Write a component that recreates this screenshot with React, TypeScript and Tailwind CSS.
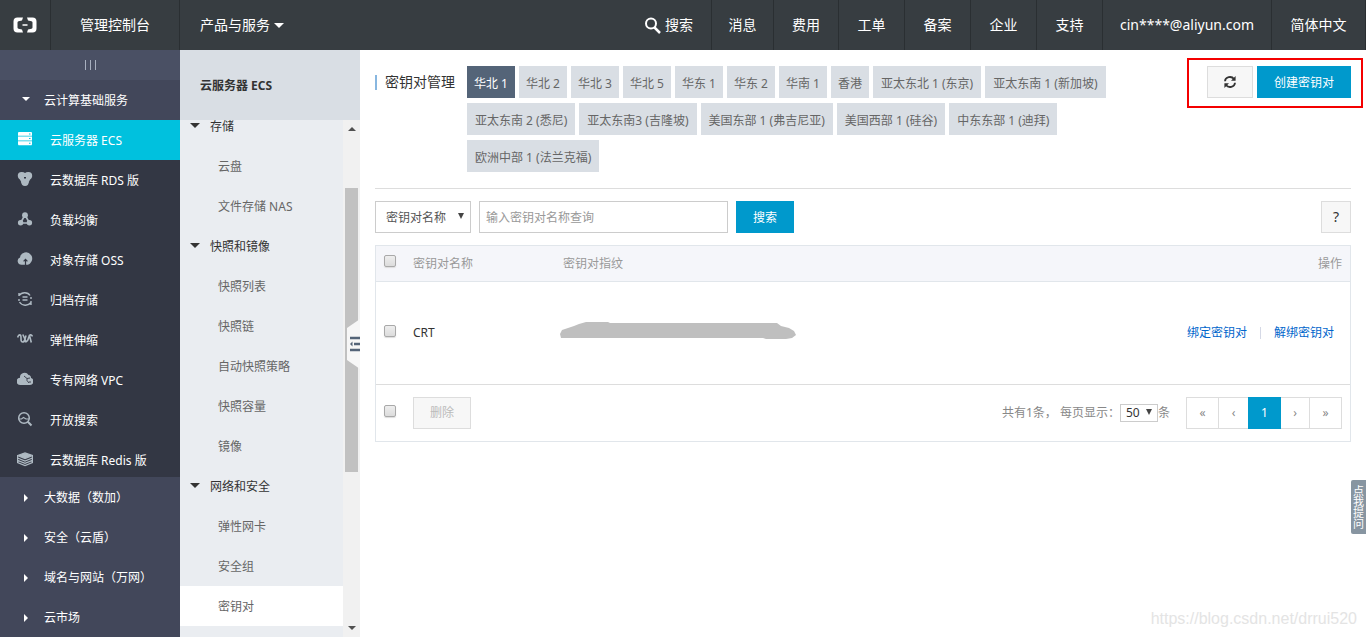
import { useState } from "react";
import type { ReactNode } from "react";
import clsx from "clsx";

const topLinks = [
    { label: "消息", width: "w-[62px]" },
    { label: "费用", width: "w-[65px]" },
    { label: "工单", width: "w-[66px]" },
    { label: "备案", width: "w-[66px]" },
    { label: "企业", width: "w-[66px]" },
    { label: "支持", width: "w-[66px]" },
    { label: "cin****@aliyun.com", width: "w-[169px]" },
    { label: "简体中文", width: "w-[94px]" },
];

const glyphs: Record<string, ReactNode> = {
    ecs: (
        <g>
            <path fill="currentColor" d="M1.5 1h13l.5 1v2.8H1V2zM1 5.500h14v4H1zM1 10.200h14v3l-.5 1h-13L1 13.200z" />
            <path fill="#00c1de" d="M12 2.500h1.500v1H12zM12 7h1.500v1H12zM12 11.700h1.500v1H12z" />
        </g>
    ),
    rds: (
        <g>
            <path fill="currentColor" d="M4.500 1.500h7L14 7l-2.500 4.500L8 14l-3.500-2.500L2 7z" />
            <circle cx="4.500" cy="4.800" r="3.700" fill="currentColor" />
            <circle cx="11.500" cy="4.800" r="3.700" fill="currentColor" />
            <circle cx="8" cy="11.200" r="3.700" fill="currentColor" />
            <path d="M7 1h2l-1 1zM7 6h2v1.500H7z" fill="#333744" />
        </g>
    ),
    slb: (
        <g fill="currentColor">
            <path d="M8 4L3.500 12M8 4l4.500 8M3.500 12h9" stroke="currentColor" strokeWidth="1.600" fill="none" />
            <circle cx="8" cy="4.200" r="2.900" />
            <circle cx="3.600" cy="11.800" r="2.700" />
            <circle cx="12.400" cy="11.800" r="2.700" />
        </g>
    ),
    oss: (
        <g>
            <path fill="currentColor" d="M4.500 13.800A3.800 3.800 0 0 1 3 6.500 6 6 0 0 1 14 4c1.800 2 1.600 5.800-.4 7.700-1 1.300-2.200 2.100-3.800 2.100z" />
            <path d="M8.500 14V8.500M6.600 10.300l1.900-2 1.900 2" stroke="#333744" strokeWidth="1.200" fill="none" />
        </g>
    ),
    archive: (
        <g stroke="currentColor" strokeWidth="1.400" fill="none">
            <path d="M2 5V2m0 2.500C5 .5 11 1 13 4.500M14 10v4m0-2.500C11 15.500 5 15 2.500 11M2 8v2M14 6v2" />
            <path d="M5.500 6h5M5.500 9h5" />
        </g>
    ),
    scaling: (
        <path d="M.6 6.500c.9-3.500 3.400-3.500 3.400 0v1.500c0 4 3 4 4 0l1-3.500M15.500 5.500c-1-2.500-3.200-2-3.700.5l-.6 2c-.7 3-3.200 4-3.900 1M5.800 3.500l3.200 7M12.500 4.500l1.800 7" stroke="currentColor" strokeWidth="1.600" fill="none" />
    ),
    vpc: (
        <g>
            <path fill="currentColor" d="M3.500 14A3.600 3.600 0 0 1 3 6.800 4.600 4.600 0 0 1 11.500 4c1.900.3 2.600 1.400 2.500 3a3.600 3.600 0 0 1-1 7z" />
            <path d="M7 5l3 2.500v2l2 2.500M10 7.500l3-.5M12 11h2" stroke="#333744" strokeWidth=".9" fill="none" />
        </g>
    ),
    search: (
        <g stroke="currentColor" fill="none">
            <circle cx="7" cy="7" r="5.300" strokeWidth="1.500" />
            <path d="M10.800 10.800l3.700 3.700" strokeWidth="2" />
            <path d="M1.500 8h3l2-1.500 2.500 1.500h3" strokeWidth="1.200" />
        </g>
    ),
    redis: (
        <g stroke="currentColor" fill="none" strokeWidth="1.300">
            <path fill="currentColor" d="M.6 4.500L8 2l7.400 2.500L8 7.500z" />
            <path d="M.6 4.500v7L8 14.500l7.400-3v-7M.6 7L8 10l7.400-3M.6 9.300L8 12.300 15.400 9.300" />
        </g>
    ),
};

const products = [
    { name: "云服务器 ECS", icon: "ecs" },
    { name: "云数据库 RDS 版", icon: "rds" },
    { name: "负载均衡", icon: "slb" },
    { name: "对象存储 OSS", icon: "oss" },
    { name: "归档存储", icon: "archive" },
    { name: "弹性伸缩", icon: "scaling" },
    { name: "专有网络 VPC", icon: "vpc" },
    { name: "开放搜索", icon: "search" },
    { name: "云数据库 Redis 版", icon: "redis" },
];

const productGroups = ["大数据（数加）", "安全（云盾）", "域名与网站（万网）", "云市场"];

const ecsMenu = [
    { title: "存储", items: ["云盘", "文件存储 NAS"] },
    { title: "快照和镜像", items: ["快照列表", "快照链", "自动快照策略", "快照容量", "镜像"] },
    { title: "网络和安全", items: ["弹性网卡", "安全组", "密钥对"] },
];

const regions = [
    "华北 1", "华北 2", "华北 3", "华北 5", "华东 1", "华东 2", "华南 1", "香港",
    "亚太东北 1 (东京)", "亚太东南 1 (新加坡)", "亚太东南 2 (悉尼)", "亚太东南3 (吉隆坡)",
    "美国东部 1 (弗吉尼亚)", "美国西部 1 (硅谷)", "中东东部 1 (迪拜)", "欧洲中部 1 (法兰克福)",
];

function CaretDown({ className }: { className?: string }) {
    return (
        <svg width="10" height="5" viewBox="0 0 10 5" className={className} aria-hidden="true">
            <path d="M0 0h10L5 5z" fill="currentColor" />
        </svg>
    );
}

function CheckBox({ label }: { label: string }) {
    return (
        <input
            type="checkbox"
            aria-label={label}
            className="block w-3 h-3 appearance-none rounded-[2px] border border-[#a9a9a9] bg-linear-to-b from-[#eeeeee] to-[#dcdcdc] shadow-[0_1px_1px_#dddddd] checked:bg-[#0099cc]"
        />
    );
}

function TopBar() {
    return (
        <header className="flex h-[50px] shrink-0 bg-[#373d41] text-white text-sm">
            <a href="#" aria-label="首页" className="flex w-[51px] items-center justify-center border-r border-[#2a2f32]">
                <svg width="24" height="16" viewBox="0 0 24 16" aria-hidden="true">
                    <path d="M10 .5H4.500A4 4 0 0 0 .5 4.500v7a4 4 0 0 0 4 4H10l-1-3-3.500-.8a1.200 1.200 0 0 1-1-1.200v-5a1.200 1.200 0 0 1 1-1.200L9 3.500zM14 .5h5.500a4 4 0 0 1 4 4v7a4 4 0 0 1-4 4H14l1-3 3.500-.8a1.200 1.200 0 0 0 1-1.200v-5a1.200 1.200 0 0 0-1-1.200L15 3.500zM9.500 7.200h5v1.600h-5z" fill="#fff" />
                </svg>
            </a>
            <a href="#" className="flex w-[129px] items-center justify-center border-r border-[#2a2f32]">管理控制台</a>
            <button type="button" className="flex items-center gap-1 pl-5">
                产品与服务
                <CaretDown />
            </button>
            <nav className="ml-auto flex">
                <button type="button" className="flex items-center gap-1 border-r border-[#2a2f32] px-[18px]">
                    <svg width="17" height="17" viewBox="0 0 17 17" fill="none" stroke="#fff" aria-hidden="true">
                        <circle cx="7" cy="6.500" r="5" strokeWidth="2" />
                        <path d="M10.500 10.500L16 16" strokeWidth="2.500" />
                    </svg>
                    搜索
                </button>
                {topLinks.map(l => (
                    <a key={l.label} href="#" className={clsx("flex items-center justify-center border-r border-[#2a2f32]", l.width)}>
                        {l.label}
                    </a>
                ))}
            </nav>
        </header>
    );
}

function ProductSidebar() {
    return (
        <nav className="flex w-[180px] shrink-0 flex-col overflow-hidden bg-[#42475a] text-white">
            <button type="button" aria-label="收起" className="flex h-[30px] shrink-0 items-center justify-center gap-1 bg-[#4a5064]">
                <span className="h-[10px] w-px bg-[#a8b0bf]" />
                <span className="h-[10px] w-px bg-[#a8b0bf]" />
                <span className="h-[10px] w-px bg-[#a8b0bf]" />
            </button>
            <button type="button" className="flex h-10 shrink-0 items-center gap-[14px] pl-[22px]">
                <CaretDown className="mb-[2px] w-2 h-4" />
                <span className="pt-[2px]">云计算基础服务</span>
            </button>
            <ul className="h-[357px] shrink-0 overflow-hidden bg-[#333744]">
                {products.map((p, i) => (
                    <li key={p.name}>
                        <a href="#" className={clsx("flex h-10 items-center gap-[17px] pl-[17px]", i === 0 && "bg-[#00c1de]")}>
                            <svg width="16" height="16" viewBox="0 0 16 16" className={clsx("mb-[2px]", i === 0 ? "text-white" : "text-[#aeb9c2]")} aria-hidden="true">
                                {glyphs[p.icon]}
                            </svg>
                            <span className="pt-[2px]">{p.name}</span>
                        </a>
                    </li>
                ))}
            </ul>
            {productGroups.map(g => (
                <button key={g} type="button" className="flex h-10 shrink-0 items-center gap-4 pt-[2px] pl-6">
                    <svg width="4" height="8" viewBox="0 0 4 8" aria-hidden="true"><path d="M0 0l4 4-4 4z" fill="#fff" /></svg>
                    {g}
                </button>
            ))}
        </nav>
    );
}

function EcsSidebar() {
    return (
        <aside className="relative flex w-[180px] shrink-0 flex-col">
            <h2 className="flex h-[70px] shrink-0 items-center bg-[#d9dee4] pt-[2px] pl-5 font-bold text-[#333333]">云服务器 ECS</h2>
            <div className="flex min-h-0 flex-1">
                <div className="flex-1 overflow-hidden bg-[#eaedf1]">
                    {/* list is scrolled part-way into the first group */}
                    <div className="-mt-[14px]">
                        {ecsMenu.map(group => (
                            <div key={group.title}>
                                <button type="button" className="flex h-10 w-full items-center gap-[10px] pl-[10px] leading-3 text-[#333333]">
                                    <CaretDown className="mb-[2px]" />
                                    <span className="pt-[2px]">{group.title}</span>
                                </button>
                                <ul>
                                    {group.items.map(item => (
                                        <li key={item}>
                                            <a href="#" className={clsx("flex h-10 items-center pt-[2px] pl-[38px] text-[#666666]", item === "密钥对" && "bg-white")}>{item}</a>
                                        </li>
                                    ))}
                                </ul>
                            </div>
                        ))}
                    </div>
                </div>
                <div className="flex w-[17px] flex-col items-center bg-[#f1f1f1] py-[7px] text-[#505050]">
                    <CaretDown className="w-2 h-1 rotate-180" />
                    <div className="flex w-[13px] flex-1 flex-col">
                        <div className="grow-[57]" />
                        <div className="grow-[284] bg-[#c1c1c1]" />
                        <div className="grow-[154]" />
                    </div>
                    <CaretDown className="w-2 h-1" />
                </div>
            </div>
            <button type="button" aria-label="收起菜单" className="absolute right-0 top-[269px]">
                <svg width="13" height="50" viewBox="0 0 13 50" className="block" aria-hidden="true">
                    <path d="M13 0v50L0 41V9z" fill="#f7f7f7" />
                    <path d="M3 19h10M7 25h6M3 31h10" stroke="#546478" strokeWidth="2.600" />
                    <path d="M5.500 22.500v5L3 25z" fill="#546478" />
                </svg>
            </button>
        </aside>
    );
}

function RegionHeader() {
    const [active, setActive] = useState("华北 1");

    return (
        <div className="flex items-start border-b border-[#dddddd] pb-4">
            <h1 className="mt-2 flex w-[92px] shrink-0 items-center text-sm leading-4 text-[#333333]">
                <span className="mr-2 h-[15px] w-[2px] bg-[#88b7e0]" />
                密钥对管理
            </h1>
            <div className="flex flex-1 flex-wrap gap-x-1 gap-y-[5px]">
                {regions.map(r => (
                    <button
                        key={r}
                        type="button"
                        onClick={() => setActive(r)}
                        className={clsx(
                            "h-8 pt-1",
                            r.includes("(") ? "px-2" : "px-[7px]",
                            r === active ? "bg-[#546478] text-white" : "bg-[#d9dee4] text-[#666666]"
                        )}
                    >
                        {r}
                    </button>
                ))}
            </div>
            <div className="relative ml-9 flex gap-1">
                <button type="button" aria-label="刷新" className="flex h-8 w-[46px] items-center justify-center border border-[#dddddd] bg-[#f7f7f7]">
                    <svg width="14" height="14" viewBox="0 0 14 14" aria-hidden="true">
                        <path d="M2 6.200C2.300 1.800 8.500.600 11 4M12 7.800c-.3 4.400-6.500 5.600-9 2.200" stroke="#333" strokeWidth="1.800" fill="none" />
                        <path d="M12.600 1v4.800H8zM1.400 13V8.200H6z" fill="#333" />
                    </svg>
                </button>
                <button type="button" className="h-8 w-[94px] bg-[#0099cc] pt-[2px] text-white">创建密钥对</button>
                <div className="pointer-events-none absolute -left-5 -right-3 -top-2 -bottom-[10px] border-2 border-[#f40000]" />
            </div>
        </div>
    );
}

function FilterBar() {
    return (
        <form className="mt-3 flex gap-2" onSubmit={e => e.preventDefault()}>
            <div className="relative">
                <select aria-label="查询字段" className="h-8 w-24 appearance-none border border-[#cccccc] bg-white pt-[2px] pl-[10px] text-[#555555]">
                    <option>密钥对名称</option>
                </select>
                <svg width="6" height="6" viewBox="0 0 6 6" className="pointer-events-none absolute right-[7px] top-3" aria-hidden="true"><path d="M0 0h6L3 6z" fill="#444" /></svg>
            </div>
            <input
                type="text"
                aria-label="密钥对名称"
                placeholder="输入密钥对名称查询"
                className="h-8 w-[249px] border border-[#cccccc] px-[6px] placeholder:text-[#999999]"
            />
            <button type="submit" className="h-8 w-[58px] bg-[#0099cc] pt-[2px] text-white">搜索</button>
            <button type="button" aria-label="帮助" className="ml-auto h-8 w-[30px] border border-[#dddddd] bg-[#f7f7f7] text-sm text-[#333333]">?</button>
        </form>
    );
}

function Pagination() {
    return (
        <div className="flex items-center">
            <span>共有1条， 每页显示：</span>
            <div className="relative">
                <select aria-label="每页显示" className="block h-[18px] w-[38px] appearance-none border border-[#cccccc] bg-white pl-[5px] leading-4 text-[#333333]">
                    <option>50</option>
                </select>
                <svg width="6" height="6" viewBox="0 0 6 6" className="pointer-events-none absolute right-[6px] top-[5px]" aria-hidden="true"><path d="M0 0h6L3 6z" fill="#444" /></svg>
            </div>
            <span>条</span>
            <div className="ml-4 flex h-8 border border-r-0 border-[#dddddd]">
                <button type="button" className="w-8 border-r border-[#dddddd]">«</button>
                <button type="button" className="w-[29px]">‹</button>
                <button type="button" className="-my-px w-[33px] bg-[#0099cc] text-white">1</button>
                <button type="button" className="w-[29px] border-r border-[#dddddd]">›</button>
                <button type="button" className="w-8 border-r border-[#dddddd]">»</button>
            </div>
        </div>
    );
}

function KeyPairTable() {
    return (
        <div className="mt-3 border border-[#e1e6eb]">
            <table className="w-full table-fixed text-left">
                <thead>
                    <tr className="h-[35px] border-b border-[#e1e6eb] bg-[#f5f6fa] text-[#999999]">
                        <th className="w-[29px] pb-1 pl-2"><CheckBox label="全选" /></th>
                        <th className="w-[150px] px-2 pt-[2px] font-normal">密钥对名称</th>
                        <th className="px-2 pt-[2px] font-normal">密钥对指纹</th>
                        <th className="px-2 pt-[2px] text-right font-normal">操作</th>
                    </tr>
                </thead>
                <tbody>
                    <tr className="h-[103px] border-b border-[#dddddd]">
                        <td className="pb-1 pl-2"><CheckBox label="选择 CRT" /></td>
                        <td className="px-2 text-[#333333]">CRT</td>
                        <td className="px-2 pb-1">
                            <svg width="233" height="17" viewBox="3 0 233 17" className="overflow-visible" role="img" aria-label="指纹已隐藏">
                                <path d="M0 12l2-4 6-2 6-2 5-2 7-2h22l2 1h167l4 3 8 2 5 3 2 4-4 3-6 1h-20l-3-1H1z" fill="#bfbfbf" />
                            </svg>
                        </td>
                        <td className="pr-4">
                            <div className="flex items-center justify-end text-[#0066cc]">
                                <a href="#">绑定密钥对</a>
                                <span className="mx-[13px] h-3 w-px bg-[#d5d9e6]" />
                                <a href="#">解绑密钥对</a>
                            </div>
                        </td>
                    </tr>
                </tbody>
                <tfoot>
                    <tr className="h-[57px] text-[#888888]">
                        <td className="pb-1 pl-2"><CheckBox label="全选本页" /></td>
                        <td colSpan={3} className="px-2">
                            <div className="flex items-center justify-between">
                                <button type="button" disabled className="h-8 w-[58px] border border-[#dddddd] bg-[#f7f7f7] text-[#bbbbbb]">删除</button>
                                <Pagination />
                            </div>
                        </td>
                    </tr>
                </tfoot>
            </table>
        </div>
    );
}

export default function App() {
    return (
        <div className="relative flex h-screen flex-col overflow-hidden bg-white text-xs font-['Noto_Sans','Noto_Sans_CJK_SC',sans-serif]">
            <TopBar />
            <div className="flex min-h-0 flex-1">
                <ProductSidebar />
                <EcsSidebar />
                <main className="min-w-0 flex-1 px-[15px] pt-4">
                    <RegionHeader />
                    <FilterBar />
                    <KeyPairTable />
                </main>
            </div>
            <button type="button" className="absolute right-0 bottom-[103px] flex h-[54px] w-[15px] items-center justify-center rounded-l-[2px] bg-[#8795a1] text-[11px] leading-[11px] text-white">
                <span className="w-[11px] break-all">点我提问</span>
            </button>
            <p className="pointer-events-none absolute right-[9px] bottom-2 text-base leading-5 text-[#e4e4e4] font-['Liberation_Sans',sans-serif]">https://blog.csdn.net/drrui520</p>
        </div>
    );
}
